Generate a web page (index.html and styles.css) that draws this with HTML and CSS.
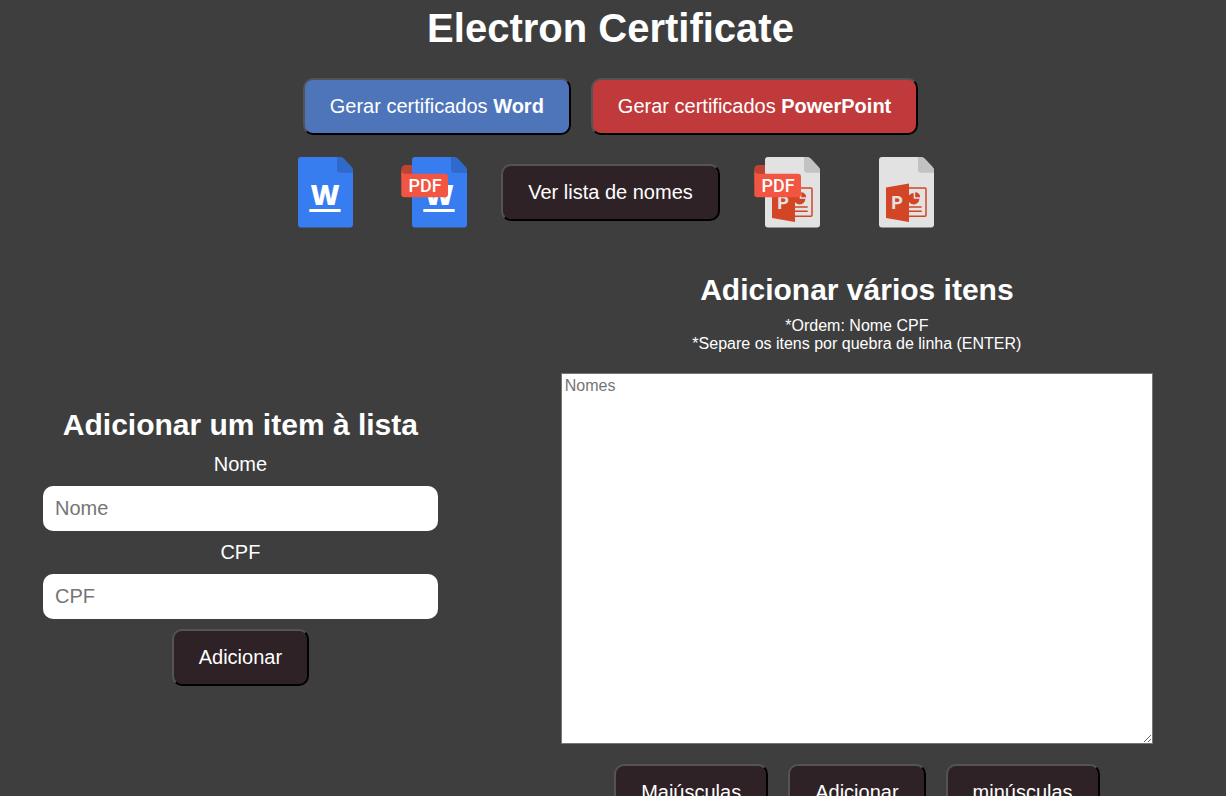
FILE: index.html
```html
<!DOCTYPE html>
<html lang="pt-BR">
<head>
<meta charset="utf-8">
<title>Electron Certificate</title>
<link rel="stylesheet" href="styles.css">
</head>
<body>
<svg class="defs" aria-hidden="true">
  <symbol id="word" viewBox="0 -1 94 72">
    <path fill="#377df0" d="M28 0H67Q69 0 70.500 1.500L78.500 10Q80 11.500 80 14V67.500a3 3 0 0 1-3 3H28a3 3 0 0 1-3-3V3a3 3 0 0 1 3-3z"/>
    <path fill="#2f6acb" d="M64 0H67Q69 0 70.500 1.500L78.500 10Q80 11.500 80 14V15.700H68c-3 0-4-1-4-4z"/>
    <text class="glyph-w" x="52" y="48" text-anchor="middle">W</text>
    <path fill="#fff" d="M36.300 52H67.700V55H36.300z"/>
  </symbol>
  <symbol id="ppt" viewBox="0 -1 94 72">
    <path fill="#e2e2e2" d="M28 0H67Q69 0 70.500 1.500L78.500 10Q80 11.500 80 14V67.500a3 3 0 0 1-3 3H28a3 3 0 0 1-3-3V3a3 3 0 0 1 3-3z"/>
    <path fill="#c2c2c2" d="M64 0H67Q69 0 70.500 1.500L78.500 10Q80 11.500 80 14V15.700H68c-3 0-4-1-4-4z"/>
    <g transform="translate(0 -1)">
      <path fill="none" stroke="#d24625" stroke-width="1.500" d="M54 32H71q1 0 1 1V59.300q0 1-1 1H54"/>
      <path fill="#d24625" d="M59.700 37v5.700h5.700A5.700 5.700 0 1 1 59.700 37zM61.200 36.200a5 5 0 0 1 5 5h-5z"/>
      <path stroke="#d24625" stroke-width="1.500" d="M54 51H67.700M54 55.300H67.700"/>
      <path fill="#d24625" d="M32 31.500L55 27.500V66L32 62z"/>
      <text class="glyph-p" x="43" y="53" text-anchor="middle">P</text>
    </g>
  </symbol>
  <symbol id="pdf" viewBox="0 -1 94 72">
    <path fill="#bd4334" d="M25 8H18.500a4.200 4.200 0 0 0-4.200 4.200V21H25z"/>
    <path fill="#f25542" d="M14.300 13q0 3.700 4 3.700H58a3 3 0 0 1 3 3V37.300a3 3 0 0 1-3 3H17.300a3 3 0 0 1-3-3z"/>
    <text class="glyph-pdf" x="38" y="35" text-anchor="middle">PDF</text>
  </symbol>
</svg>
<header class="top">
  <h1>Electron Certificate</h1>
  <div class="row">
    <button class="btn btn-word" type="button">Gerar certificados <b>Word</b></button>
    <button class="btn btn-ppt" type="button">Gerar certificados <b>PowerPoint</b></button>
  </div>
  <div class="row">
    <svg class="file" role="img" aria-label="Word"><use href="#word"/></svg>
    <svg class="file" role="img" aria-label="Word PDF"><use href="#word"/><use href="#pdf"/></svg>
    <button class="btn" type="button">Ver lista de nomes</button>
    <svg class="file" role="img" aria-label="PowerPoint PDF"><use href="#ppt"/><use href="#pdf"/></svg>
    <svg class="file" role="img" aria-label="PowerPoint"><use href="#ppt"/></svg>
  </div>
</header>
<main class="columns">
  <form class="single">
    <h2>Adicionar um item à lista</h2>
    <label for="nome">Nome</label>
    <input id="nome" type="text" placeholder="Nome">
    <label for="cpf">CPF</label>
    <input id="cpf" type="text" placeholder="CPF">
    <button class="btn" type="button">Adicionar</button>
  </form>
  <form class="multi">
    <div class="intro">
      <h2>Adicionar vários itens</h2>
      <label for="nomes">*Ordem: Nome CPF<br>*Separe os itens por quebra de linha (ENTER)</label>
    </div>
    <textarea id="nomes" placeholder="Nomes"></textarea>
    <div class="row">
      <button class="btn" type="button">Maiúsculas</button>
      <button class="btn" type="button">Adicionar</button>
      <button class="btn" type="button">minúsculas</button>
    </div>
  </form>
</main>
</body>
</html>
```
FILE: styles.css
```css
* {
  box-sizing: border-box;
}

html {
  background: #3e3e3e;
  scrollbar-width: none;
}

body {
  margin: 0;
  padding: 5px 5px 20px 0;
  color: #fff;
  font: 20px/23px Arial, "Liberation Sans", sans-serif;
}

h1,
h2 {
  margin: 0;
  text-align: center;
}

h1 {
  margin-bottom: 7px;
  font-size: 40px;
  line-height: 46px;
}

h2 {
  font-size: 30px;
  line-height: 36px;
}

.defs {
  display: none;
}

.top {
  display: flex;
  flex-direction: column;
  gap: 20px;
}

.row {
  display: flex;
  justify-content: center;
  align-items: center;
  gap: 20px;
}

.btn {
  padding: 15px 25px;
  border: 2px outset #000;
  border-radius: 10px;
  background: #2e2226;
  color: #fff;
  font: inherit;
  white-space: nowrap;
}

.btn-word {
  background: #4e75ba;
}

.btn-ppt {
  background: #c03a3c;
}

.file {
  width: 94px;
  height: 74px;
}

.glyph-w {
  fill: #fff;
  font: 800 28px "Open Sans", sans-serif;
}

.glyph-p {
  fill: #e2e2e2;
  font: 700 18px Roboto, sans-serif;
}

.glyph-pdf {
  fill: #fff;
  font: 500 18px Roboto, sans-serif;
}

.columns {
  display: grid;
  grid-template-columns: 2fr 3fr;
  align-items: center;
  column-gap: 123px;
  margin-top: 43px;
  padding: 0 68px 0 43px;
}

.single {
  display: flex;
  flex-direction: column;
  align-items: center;
  gap: 10px;
}

.single input {
  width: 100%;
  height: 45px;
  padding: 0 12px;
  border: 0;
  border-radius: 10px;
  font: inherit;
}

.multi {
  display: flex;
  flex-direction: column;
  gap: 20px;
}

.intro {
  display: flex;
  flex-direction: column;
  gap: 9px;
  font-size: 16px;
  line-height: 18px;
  text-align: center;
}

textarea {
  width: 100%;
  height: 371px;
  padding: 3px;
  border: 1px solid #767676;
  font: 16px/18px Arial, "Liberation Sans", sans-serif;
  resize: both;
}
```
